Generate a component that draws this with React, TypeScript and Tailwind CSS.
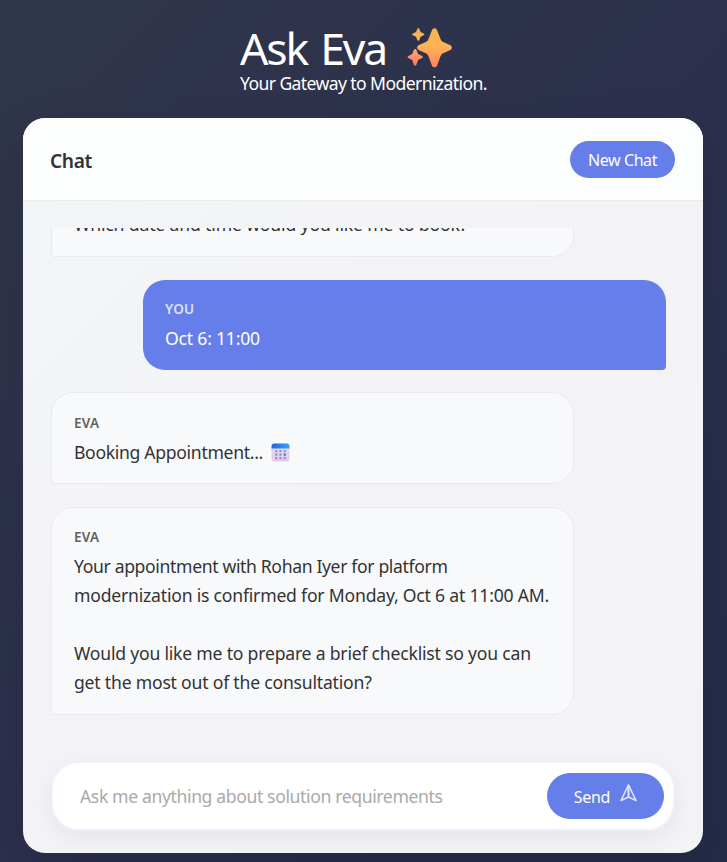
import type { ReactNode } from 'react';

function Sparkles() {
  return (
    <svg className="ml-[21px] mt-[11px] h-[42px] w-[46px] shrink-0" viewBox="0 0 46 42">
      <defs>
        <linearGradient id="spark" x1="0" y1="0" x2="0" y2="1">
          <stop offset="0" stopColor="#f4b04a" />
          <stop offset="0.45" stopColor="#ffb454" />
          <stop offset="1" stopColor="#ff8067" />
        </linearGradient>
        <linearGradient id="sparkTop" x1="0" y1="0" x2="0" y2="1">
          <stop offset="0" stopColor="#efad4b" />
          <stop offset="1" stopColor="#ffb85c" />
        </linearGradient>
        <linearGradient id="sparkLow" x1="0" y1="0" x2="0" y2="1">
          <stop offset="0" stopColor="#ffa763" />
          <stop offset="1" stopColor="#ff7866" />
        </linearGradient>
      </defs>
      <path fill="url(#spark)" d="M25 3C26 .8 29 .8 30 3l3.500 8.900c.7 1.700 1.600 2.600 3.300 3.300l6.600 3c2 1 2 3.800 0 4.700l-6.600 3c-1.700.8-2.600 1.600-3.300 3.300L30 38.700c-1 2.200-4 2.200-5 0l-3.500-9.500c-.7-1.700-1.600-2.500-3.300-3.300l-6.600-3c-2-.9-2-3.700 0-4.700l6.600-3c1.700-.7 2.600-1.600 3.300-3.300Z" />
      <path fill="url(#sparkTop)" d="M10.300 1.900c.4-1.100 1.600-1.100 2 0l1.300 3.100 3.100 1.400c.9.500.9 1.400 0 1.800L13.600 9.700l-1.300 3.300c-.4 1-1.600 1-2 0L9 9.700 5.900 8.200c-.9-.4-.9-1.300 0-1.800L9 5Z" />
      <path fill="url(#sparkLow)" d="M6.900 22.700c.5-1.100 2-1.100 2.500 0l1.700 4.300 4 1.900c1 .5 1 1.600 0 2.100l-4 1.900-1.700 4.800c-.5 1.200-2 1.200-2.500 0l-1.700-4.800-3.800-1.900c-1-.5-1-1.600 0-2.100l3.800-1.900Z" />
    </svg>
  );
}

function CalendarIcon() {
  return (
    <svg className="ml-2 inline-block h-[19px] w-[19px] align-[-3px]" viewBox="0 0 19 19">
      <defs>
        <linearGradient id="calTop">
          <stop stopColor="#2864dd" />
          <stop offset="1" stopColor="#2da5ff" />
        </linearGradient>
        <linearGradient id="calBody" x1="0" y1="0" x2="0" y2="1">
          <stop stopColor="#e2e0ee" />
          <stop offset="1" stopColor="#e0c8f0" />
        </linearGradient>
      </defs>
      <rect x=".5" y=".5" width="18" height="18" rx="3" fill="url(#calBody)" />
      <path d="M.5 5.500v-2a3 3 0 0 1 3-3h12a3 3 0 0 1 3 3v2Z" fill="url(#calTop)" />
      {[7, 10.500, 14].map((y) =>
        [4, 8.300, 12.600].map((x) => (
          <rect key={`${x}-${y}`} x={x} y={y} width="2.400" height="2.200" rx=".7" fill={x > 12 && y === 10.500 ? '#1687ef' : '#a294b3'} />
        )),
      )}
    </svg>
  );
}

function SendIcon() {
  return (
    <svg className="mb-[6px] ml-[10px] h-[18px] w-[17px]" viewBox="0 0 17 18" fill="none" stroke="#dfe4fc" strokeWidth="1.600" strokeLinejoin="round">
      <path d="M8.500 1 1 16.500l7.500-3.400 7.500 3.400Z" />
      <path d="M8.500 1v12.100" strokeWidth="2" />
    </svg>
  );
}

function EvaMessage({ children, label = true, labelLeading = 'leading-[24px]' }: { children: ReactNode; label?: boolean; labelLeading?: string }) {
  return (
    <div className="w-[523px] shrink-0 rounded-[22px] rounded-bl-[4px] border border-[#e9eaec] bg-[#f8f9fb] px-[22px] py-[17px] text-[#333]">
      {label && <div className={`mb-1 h-[23px] text-[13.500px] font-semibold tracking-[0.3px] text-[#606162] ${labelLeading}`}>EVA</div>}
      {children}
    </div>
  );
}

function Line({ children, className = 'tracking-[-0.21px]' }: { children?: ReactNode; className?: string }) {
  return <div className={`h-[29px] whitespace-nowrap text-[17.600px] leading-[29px] ${className}`}>{children}</div>;
}

export default function App() {
  return (
    <div className="flex h-[862px] w-[727px] flex-col overflow-hidden bg-linear-135 from-[#30364a] via-[#2c304d] to-[#242c49] font-['Segoe_UI','Noto_Sans',sans-serif]">
      <header className="h-[118px] shrink-0 pl-[240px] pt-[16px] text-white">
        <div className="flex h-[57px] items-start">
          <h1 className="mt-[5px] w-[146px] whitespace-nowrap text-[44.500px] font-[370] leading-[54px] tracking-[-2.100px] [word-spacing:3.500px]">Ask Eva</h1>
          <Sparkles />
        </div>
        <p className="whitespace-nowrap text-[17.600px] leading-[20px] tracking-[-0.610px]">Your Gateway to Modernization.</p>
      </header>

      <main className="ml-[23px] flex h-[735px] w-[680px] shrink-0 flex-col overflow-hidden rounded-[22px] bg-linear-135 from-[#f3f5f8] via-[#f3f3f5] to-[#f3f3f5] shadow-[0_18px_50px_rgba(0,0,0,0.12)]">
        <div className="flex h-[83px] shrink-0 items-center justify-between border-b border-[#ebedee] bg-[#fcfdfd] pl-[27px] pr-7">
          <h2 className="pt-[5px] text-[19.200px] font-semibold tracking-[-0.4px] text-[#333]">Chat</h2>
          <button className="h-[37px] w-[105px] whitespace-nowrap rounded-full bg-[#667eea] pt-[2px] text-[16px] tracking-[-0.4px] text-white">New Chat</button>
        </div>

        <div className="ml-7 mt-[27px] flex h-[492px] w-[615px] shrink-0 flex-col justify-end overflow-hidden pb-[5px]">
          <div className="flex flex-col gap-[23px]">
            <EvaMessage label={false}>
              <Line className="tracking-[-0.150px]">Which date and time would you like me to book?</Line>
            </EvaMessage>
            <div className="-mb-px h-[90px] w-[523px] shrink-0 self-end rounded-[22px] rounded-br-[4px] bg-[#667eea] px-[22px] py-[17px] text-white">
              <div className="mb-1 h-[23px] text-[13.500px] font-semibold leading-[24px] tracking-[0.3px] text-[#dbe1fb]">YOU</div>
              <Line>Oct 6: 11:00</Line>
            </div>
            <EvaMessage labelLeading="leading-[26px]">
              <Line className="pt-px tracking-[-0.320px]">Booking Appointment...<CalendarIcon /></Line>
            </EvaMessage>
            <EvaMessage>
              <Line className="tracking-[-0.360px]">Your appointment with Rohan Iyer for platform</Line>
              <Line>modernization is confirmed for Monday, Oct 6 at 11:00 AM.</Line>
              <Line />
              <Line>Would you like me to prepare a brief checklist so you can</Line>
              <Line>get the most out of the consultation?</Line>
            </EvaMessage>
          </div>
        </div>

        <div className="ml-7 mt-[41px] flex h-[70px] w-[624px] shrink-0 items-center justify-between rounded-[28px] border-2 border-[#eff2fd] bg-white pl-[27px] pr-[9px] shadow-[0_7px_22px_rgba(0,0,0,0.06)]">
          <span className="whitespace-nowrap text-[17.600px] tracking-[-0.380px] text-[#a9a9a9]">Ask me anything about solution requirements</span>
          <button className="mb-px flex h-[46px] w-[117px] items-center justify-center rounded-full bg-[#667eea] text-[16px] text-white">
            <span className="pt-[2px] tracking-[-0.3px]">Send</span>
            <SendIcon />
          </button>
        </div>
      </main>
    </div>
  );
}
